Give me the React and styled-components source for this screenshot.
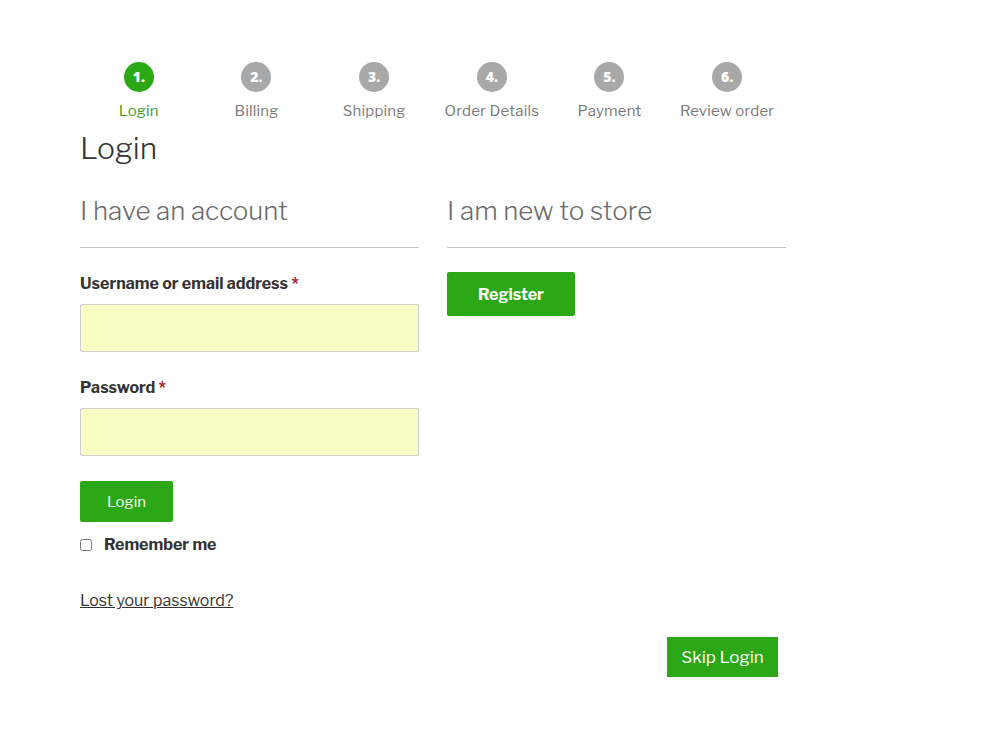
import React from 'react'
import styled, { createGlobalStyle } from 'styled-components'

const steps = ['Login', 'Billing', 'Shipping', 'Order Details', 'Payment', 'Review order']

const Global = createGlobalStyle`
body {
    margin: 0;
    background: #ffffff;
    font-family: "Libre Franklin", Lato, "Open Sans", sans-serif;
    color: #333333;
}
`

const App = () => (
    <Page>
        <Global />
        <Wrap>
            <Steps>
                {steps.map((s, i) => (
                    <Step key={s} current={i === 0}>
                        <Dot current={i === 0}>{i + 1}.</Dot>
                        <StepLabel current={i === 0}>{s}</StepLabel>
                    </Step>
                ))}
            </Steps>
            <Title>Login</Title>
            <Columns>
                <Col>
                    <ColTitle>I have an account</ColTitle>
                    <Rule />
                    <Field>
                        <Label>Username or email address <Req>*</Req></Label>
                        <Input type="text" />
                    </Field>
                    <Field>
                        <Label>Password <Req>*</Req></Label>
                        <Input type="password" />
                    </Field>
                    <LoginButton>Login</LoginButton>
                    <Remember>
                        <Check type="checkbox" />
                        <span>Remember me</span>
                    </Remember>
                    <Lost href="#">Lost your password?</Lost>
                </Col>
                <Col>
                    <ColTitle>I am new to store</ColTitle>
                    <Rule />
                    <RegisterButton>Register</RegisterButton>
                </Col>
            </Columns>
            <Footer>
                <SkipButton>Skip Login</SkipButton>
            </Footer>
        </Wrap>
    </Page>
)

const Page = styled.div`
padding: 62px 0 40px 80px;
`

const Wrap = styled.div`
width: 706px;
`

const Steps = styled.div`
display: grid;
grid-template-columns: repeat(6, 1fr);
`

const Step = styled.div`
display: flex;
flex-direction: column;
align-items: center;
`

const Dot = styled.div`
width: 30px;
height: 30px;
border-radius: 50%;
background: ${p => p.current ? '#2ca816' : '#a8a8a8'};
color: #ffffff;
font-family: "Open Sans", sans-serif;
font-weight: 800;
font-size: 14px;
line-height: 30px;
text-align: center;
`

const StepLabel = styled.div`
margin-top: 9px;
font-size: 15px;
line-height: 20px;
color: ${p => p.current ? '#3d9a1f' : '#7a7a7a'};
letter-spacing: 0.2px;
`

const Title = styled.h1`
margin: 7px 0 0;
font-size: 30px;
font-weight: 300;
line-height: 40px;
color: #333333;
`

const Columns = styled.div`
display: grid;
grid-template-columns: 339px 339px;
column-gap: 28px;
margin-top: 25px;
`

const Col = styled.div`
display: flex;
flex-direction: column;
align-items: flex-start;
`

const ColTitle = styled.h2`
margin: 0;
font-size: 26px;
font-weight: 300;
line-height: 36px;
color: #6d6d6d;
`

const Rule = styled.div`
width: 100%;
height: 1px;
background: #c4c4c4;
margin: 18px 0 24px;
`

const Field = styled.div`
width: 100%;
margin-bottom: 24px;
`

const Label = styled.label`
display: block;
font-size: 16px;
font-weight: 700;
line-height: 24px;
color: #333333;
margin-bottom: 8px;
`

const Req = styled.span`
color: #a6282d;
`

const Input = styled.input`
display: block;
box-sizing: border-box;
width: 100%;
height: 48px;
background: #fafdc2;
border: 1px solid #cccccc;
border-radius: 2px;
outline: none;
`

const GreenButton = styled.button`
border: none;
border-radius: 2px;
background: #2ca816;
color: #ffffff;
font-family: inherit;
cursor: pointer;
`

const LoginButton = styled(GreenButton)`
width: 93px;
height: 41px;
margin-top: 1px;
font-size: 15px;
`

const RegisterButton = styled(GreenButton)`
width: 128px;
height: 44px;
font-size: 16px;
font-weight: 700;
`

const Remember = styled.label`
display: flex;
align-items: center;
gap: 12px;
margin-top: 13px;
font-size: 16px;
font-weight: 700;
line-height: 20px;
`

const Check = styled.input`
margin: 0;
width: 12px;
height: 12px;
`

const Lost = styled.a`
margin-top: 34px;
font-size: 16px;
line-height: 24px;
color: #333333;
text-decoration: underline;
`

const Footer = styled.div`
display: flex;
justify-content: flex-end;
padding-right: 8px;
margin-top: 24px;
`

const SkipButton = styled(GreenButton)`
width: 111px;
height: 40px;
border-radius: 0;
font-size: 17px;
`

export default App
